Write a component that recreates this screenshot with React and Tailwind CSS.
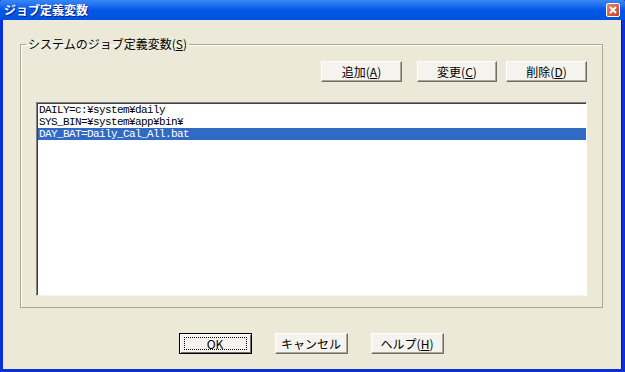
import React from 'react'

const jp = { fontFamily: '"Noto Sans CJK JP", "DejaVu Sans", sans-serif' }
const mono = { fontFamily: '"Liberation Mono", "DejaVu Sans Mono", monospace' }

function Mn({ ch }) {
  return (
    <span>
      (<span className="underline underline-offset-[1px]">{ch}</span>)
    </span>
  )
}

function Btn({ label, mn, focus, w }) {
  return (
    <button
      className={
        'h-[21px] ' + w + ' bg-[#f4f3ee] text-[12px] leading-none text-black flex items-center justify-center ' +
        (focus
          ? 'border border-black shadow-[inset_1px_1px_0_#fff,inset_-1px_-1px_0_#716f64]'
          : 'border-t border-l border-t-white border-l-white border-r border-b border-r-[#716f64] border-b-[#716f64] shadow-[inset_-1px_-1px_0_#aca899]')
      }
      style={jp}
    >
      <span
        className={
          'flex items-center justify-center ' +
          (focus ? 'border border-dotted border-black w-[63px] h-[13px]' : '')
        }
      >
        {label}
        {mn && <Mn ch={mn} />}
      </span>
    </button>
  )
}

const rows = [
  'DAILY=c:¥system¥daily',
  'SYS_BIN=¥system¥app¥bin¥',
  'DAY_BAT=Daily_Cal_All.bat',
]

export default function App() {
  return (
    <div className="w-[625px] h-[372px] flex flex-col bg-[#0831d9]" style={jp}>
      <div className="h-[20px] shrink-0 flex items-center justify-between pl-[4px] pr-[5px] bg-gradient-to-b from-[#3a86f5] via-[#0058e6] to-[#0052dd] rounded-t-[2px]">
        <span className="text-white font-bold text-[12px] leading-none [text-shadow:1px_1px_0_#0a1e8c]">
          ジョブ定義変数
        </span>
        <div className="w-[14px] h-[14px] rounded-[2px] border border-white bg-gradient-to-br from-[#e8866a] to-[#c0411b] flex items-center justify-center">
          <svg width="8" height="8" viewBox="0 0 8 8">
            <path d="M1 1 L7 7 M7 1 L1 7" stroke="#fff" strokeWidth="2" />
          </svg>
        </div>
      </div>
      <div className="flex-1 flex flex-col bg-[#ece9d8] ml-[3px] mr-[3px] mb-[3px] border-r border-[#001ea0]">
        <fieldset className="mt-[17px] ml-[17px] mr-[18px] h-[271px] border border-[#aca899] shadow-[inset_1px_1px_0_#fff] px-[15px] pt-[10px] pb-[11px]">
          <legend className="-ml-[10px] px-[2px] text-[12px] leading-[14px] text-black">
            システムのジョブ定義変数<Mn ch="S" />
          </legend>
          <div className="flex justify-end gap-[15px]">
            <Btn label="追加" mn="A" w="w-[81px]" />
            <div className="flex gap-[9px]">
              <Btn label="変更" mn="C" w="w-[80px]" />
              <Btn label="削除" mn="D" w="w-[81px]" />
            </div>
          </div>
          <div className="mt-[20px] h-[194px] bg-white border-t border-l border-t-[#808080] border-l-[#808080] border-r border-b border-r-white border-b-[#f5f4ee] shadow-[inset_1px_1px_0_#404040]">
            <div className="pt-[1px] pl-[1px]">
              {rows.map((r, i) => (
                <div
                  key={i}
                  className={
                    'h-[12px] text-[11px] leading-[12px] pl-[1px] tracking-[-0.6px] whitespace-pre ' +
                    (i === 2 ? 'bg-[#316ac5] text-white' : 'text-black')
                  }
                  style={mono}
                >
                  {r}
                </div>
              ))}
            </div>
          </div>
        </fieldset>
        <div className="mt-[25px] flex justify-center gap-[23px] pr-[2px]">
          <Btn label="OK" focus w="w-[73px]" />
          <Btn label="キャンセル" w="w-[73px]" />
          <Btn label="ヘルプ" mn="H" w="w-[73px]" />
        </div>
      </div>
    </div>
  )
}
